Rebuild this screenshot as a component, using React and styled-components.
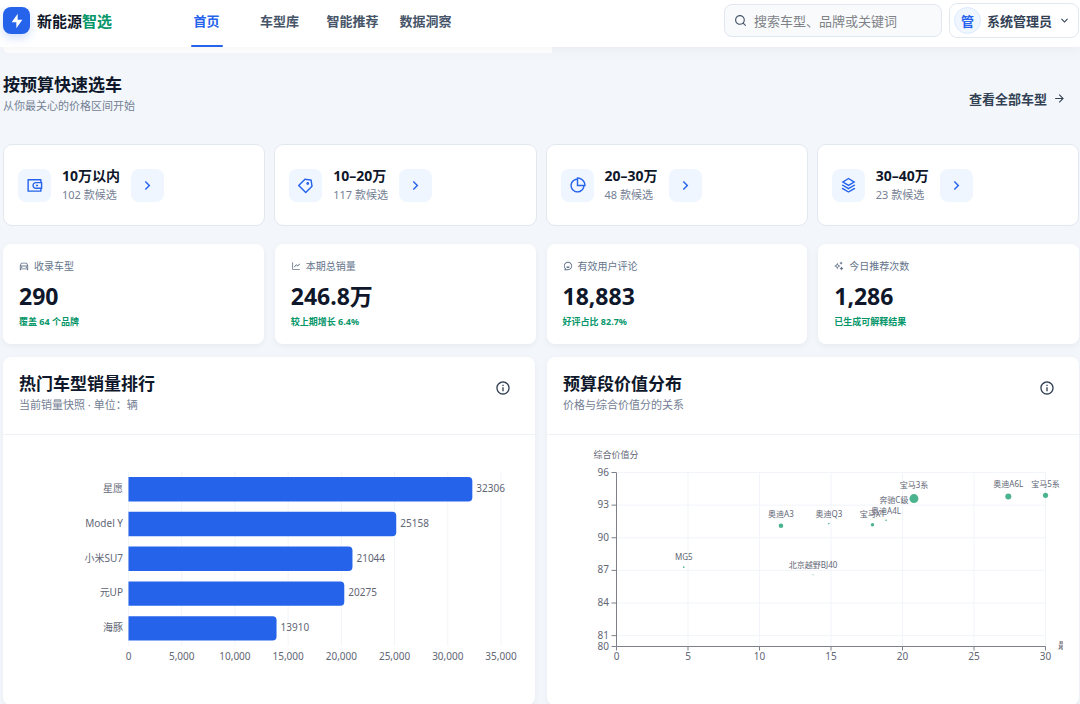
import React from "react";
import styled, { createGlobalStyle, css } from "styled-components";
import {
  RiArrowDownSLine,
  RiArrowRightLine,
  RiArrowRightSLine,
  RiCarLine,
  RiChatSmile3Line,
  RiFlashlightFill,
  RiInformationLine,
  RiLineChartLine,
  RiPieChart2Line,
  RiPriceTag3Line,
  RiSearchLine,
  RiSparkling2Line,
  RiStackLine,
  RiWallet3Line,
} from "react-icons/ri";

const GlobalStyle = createGlobalStyle`
  * {
    box-sizing: border-box;
  }
  body {
    margin: 0;
    background: #f3f7fb;
    color: #0f172a;
    font-family: "Noto Sans", "Noto Sans CJK SC", sans-serif;
    font-size: 13px;
  }
  h1, h2, p, dl, dd {
    margin: 0;
  }
  a {
    color: inherit;
    text-decoration: none;
  }
  button, input {
    font: inherit;
    color: inherit;
  }
`;

const Header = styled.header`
  position: sticky;
  top: 0;
  z-index: 2;
  display: flex;
  align-items: center;
  height: 47px;
  padding: 0 1px 6px 3px;
  background: #fff;
  box-shadow: 0 4px 12px rgba(15, 23, 42, 0.04);
`;

const Brand = styled.a`
  display: flex;
  align-items: center;
  gap: 7px;
  width: 167px;
  font-size: 15px;
  font-weight: 700;
`;

const BrandMark = styled.span`
  display: grid;
  place-items: center;
  width: 27px;
  height: 27px;
  border-radius: 8px;
  background: #2563eb;
  color: #fff;
  box-shadow: 0 4px 10px rgba(37, 99, 235, 0.2);
`;

const BrandAccent = styled.span`
  color: #059669;
`;

const Nav = styled.nav`
  display: flex;
  align-self: stretch;
`;

const NavLink = styled.a`
  position: relative;
  display: flex;
  align-items: center;
  justify-content: center;
  width: 73px;
  font-weight: 700;
  color: #475569;
  ${({ $active }) =>
    $active &&
    css`
      color: #2563eb;
      &::after {
        content: "";
        position: absolute;
        bottom: -6px;
        width: 32px;
        height: 2px;
        border-radius: 2px;
        background: #2563eb;
      }
    `}
`;

const Search = styled.label`
  display: flex;
  align-items: center;
  gap: 7px;
  width: 218px;
  height: 33px;
  margin-left: auto;
  padding: 0 9px;
  border: 1px solid #e2e8f0;
  border-radius: 8px;
  background: #f8fafc;
  color: #475569;
`;

const SearchInput = styled.input`
  flex: 1;
  min-width: 0;
  padding: 0;
  border: 0;
  outline: 0;
  background: none;
  &::placeholder {
    color: #7f8287;
    opacity: 1;
  }
`;

const UserButton = styled.button`
  display: flex;
  align-items: center;
  gap: 6px;
  height: 35px;
  margin-left: 7px;
  padding: 0 7px 0 4px;
  border: 1px solid #e2e8f0;
  border-radius: 8px;
  background: #fff;
  font-weight: 700;
  color: #334155;
`;

const Avatar = styled.span`
  display: grid;
  place-items: center;
  width: 27px;
  height: 27px;
  border: 1px solid #dbeafe;
  border-radius: 50%;
  background: #eff6ff;
  color: #2563eb;
`;

const HeroEdge = styled.div`
  width: 51%;
  height: 6px;
  border-radius: 0 0 0 8px;
  background: #fff;
`;

const Main = styled.main`
  padding: 0 1px 0 3px;
`;

const SectionHead = styled.div`
  display: flex;
  align-items: center;
  justify-content: space-between;
  padding: 20px 13px 0 0;
`;

const Title = styled.h2`
  font-size: 17px;
  line-height: 24px;
  font-weight: 700;
`;

const Subtitle = styled.p`
  font-size: 11px;
  line-height: 18px;
  color: #748094;
`;

const MoreLink = styled.a`
  display: flex;
  align-items: center;
  gap: 6px;
  padding-top: 8px;
  font-weight: 700;
  color: #334155;
`;

const BudgetGrid = styled.div`
  display: grid;
  grid-template-columns: repeat(4, 1fr);
  gap: 9px;
  margin-top: 29px;
`;

const BudgetCard = styled.a`
  display: flex;
  align-items: center;
  gap: 11px;
  height: 82px;
  padding: 0 14px;
  border: 1px solid #e2e8f0;
  border-radius: 9px;
  background: #fff;
`;

const IconTile = styled.span`
  display: grid;
  place-items: center;
  width: 33px;
  height: 33px;
  border-radius: 8px;
  background: #eff6ff;
  color: #2563eb;
`;

const BudgetName = styled.strong`
  display: block;
  font-size: 14px;
  line-height: 20px;
`;

const BudgetCount = styled.span`
  display: block;
  font-size: 11px;
  line-height: 18px;
  color: #748094;
`;

const KpiGrid = styled.div`
  display: grid;
  grid-template-columns: repeat(4, 1fr);
  gap: 11px;
  margin-top: 18px;
`;

const KpiCard = styled.section`
  padding: 14px 16px;
  border-radius: 8px;
  background: #fff;
  box-shadow: 0 2px 6px rgba(15, 23, 42, 0.05);
`;

const KpiLabel = styled.p`
  display: flex;
  align-items: center;
  gap: 5px;
  font-size: 10px;
  line-height: 16px;
  color: #64748b;
`;

const KpiValue = styled.p`
  margin-top: 6px;
  font-size: 23px;
  line-height: 32px;
  font-weight: 700;
`;

const KpiNote = styled.p`
  font-size: 9px;
  line-height: 18px;
  padding-top: 1px;
  margin-bottom: -1px;
  font-weight: 700;
  color: #059669;
`;

const PanelGrid = styled.div`
  display: grid;
  grid-template-columns: repeat(2, 1fr);
  gap: 12px;
  margin-top: 13px;
`;

const Panel = styled.section`
  min-width: 0;
  border-radius: 8px;
  background: #fff;
  box-shadow: 0 2px 6px rgba(15, 23, 42, 0.05);
`;

const PanelHead = styled.div`
  display: flex;
  justify-content: space-between;
  padding: 15px 16px 20px;
  border-bottom: 1px solid #eef2f7;
`;

const InfoButton = styled.button`
  display: grid;
  place-items: center;
  width: 32px;
  height: 32px;
  padding: 0;
  border: 0;
  background: none;
  color: #334155;
`;

const Chart = styled.svg`
  display: block;
  width: 100%;
  height: auto;
  font-size: 10px;
  fill: #5f6675;
`;

const navItems = ["首页", "车型库", "智能推荐", "数据洞察"];

const budgets = [
  { name: "10万以内", count: 102, Icon: RiWallet3Line },
  { name: "10–20万", count: 117, Icon: RiPriceTag3Line },
  { name: "20–30万", count: 48, Icon: RiPieChart2Line },
  { name: "30–40万", count: 23, Icon: RiStackLine },
];

const kpis = [
  { label: "收录车型", value: "290", note: "覆盖 64 个品牌", Icon: RiCarLine },
  { label: "本期总销量", value: "246.8万", note: "较上期增长 6.4%", Icon: RiLineChartLine },
  { label: "有效用户评论", value: "18,883", note: "好评占比 82.7%", Icon: RiChatSmile3Line },
  { label: "今日推荐次数", value: "1,286", note: "已生成可解释结果", Icon: RiSparkling2Line },
];

const sales = [
  { name: "星愿", value: 32306 },
  { name: "Model Y", value: 25158 },
  { name: "小米SU7", value: 21044 },
  { name: "元UP", value: 20275 },
  { name: "海豚", value: 13910 },
];

const cars = [
  { name: "MG5", price: 4.7, score: 87.3, r: 0.9 },
  { name: "奥迪A3", price: 11.5, score: 91.1, r: 2.3 },
  { name: "奥迪Q3", price: 14.85, score: 91.3, r: 0.8 },
  { name: "北京越野BJ40", price: 13.75, score: 86.6, r: 0.5 },
  { name: "宝马X1", price: 17.9, score: 91.2, r: 1.7 },
  { name: "奥迪A4L", price: 18.85, score: 91.6, r: 0.8 },
  { name: "奔驰C级", price: 19.4, score: 92.6, r: 0.3 },
  { name: "宝马3系", price: 20.8, score: 93.6, r: 4.5 },
  { name: "奥迪A6L", price: 27.4, score: 93.8, r: 3 },
  { name: "宝马5系", price: 30, score: 93.9, r: 2.6 },
];

const barX = (v) => 125.5 + (v / 35000) * 372.5;
const dotX = (v) => 69.5 + (v / 30) * 429;
const dotY = (v) => 37.5 + (96 - v) * 10.875;

// 向右侧圆角的横条
const barPath = (x, y, w, h, r) =>
  `M${x} ${y}h${w - r}a${r} ${r} 0 0 1 ${r} ${r}v${h - 2 * r}a${r} ${r} 0 0 1 ${-r} ${r}h${r - w}z`;

function SalesChart() {
  return (
    <Chart viewBox="0 0 532 270" role="img" aria-label="热门车型销量排行">
      {[0, 5000, 10000, 15000, 20000, 25000, 30000, 35000].map((v) => (
        <g key={v}>
          <path d={`M${barX(v)} 37v174`} stroke="#f1f4f9" />
          <text x={barX(v)} y="225" textAnchor="middle">
            {v.toLocaleString("en-US")}
          </text>
        </g>
      ))}
      {sales.map(({ name, value }, i) => {
        const y = 42 + i * 34.8;
        return (
          <g key={name}>
            <path
              d={barPath(barX(0), y, barX(value) - barX(0), 24.4, 4)}
              fill="#2563eb"
            />
            <text x="120" y={y + 15} textAnchor="end">
              {name}
            </text>
            <text x={barX(value) + 4} y={y + 15}>
              {value}
            </text>
          </g>
        );
      })}
    </Chart>
  );
}

function ValueChart() {
  return (
    <Chart viewBox="0 0 532 270" role="img" aria-label="预算段价值分布">
      <clipPath id="plot">
        <rect width="516" height="270" />
      </clipPath>
      <text x="69" y="23" textAnchor="middle" fontSize="9">
        综合价值分
      </text>
      {[96, 93, 90, 87, 84, 81, 80].map((v) => (
        <g key={v}>
          <path d={`M69.5 ${dotY(v)}h429`} stroke="#f1f4f9" />
          <path d={`M64.5 ${dotY(v)}h5`} stroke="#7d8089" />
          <text x="62" y={dotY(v) + 3} textAnchor="end">
            {v}
          </text>
        </g>
      ))}
      {[0, 5, 10, 15, 20, 25, 30].map((v) => (
        <g key={v}>
          <path d={`M${dotX(v)} 37.5v174`} stroke="#f1f4f9" />
          <path d={`M${dotX(v)} 211.5v4`} stroke="#7d8089" />
          <text x={dotX(v)} y="225" textAnchor="middle">
            {v}
          </text>
        </g>
      ))}
      <path d="M69.5 37.5v174h429" fill="none" stroke="#7d8089" />
      <g clipPath="url(#plot)">
        <text x="511" y="214" fontSize="9">
          最低价
        </text>
      </g>
      {cars.map(({ name, price, score, r }) => (
        <g key={name}>
          <circle cx={dotX(price)} cy={dotY(score)} r={r} fill="#4bb48e" />
          <text
            x={dotX(price)}
            y={dotY(score) - r - 6}
            textAnchor="middle"
            fontSize="8"
          >
            {name}
          </text>
        </g>
      ))}
    </Chart>
  );
}

function ChartPanel({ title, subtitle, children }) {
  return (
    <Panel>
      <PanelHead>
        <div>
          <Title>{title}</Title>
          <Subtitle>{subtitle}</Subtitle>
        </div>
        <InfoButton aria-label="说明">
          <RiInformationLine size={16} />
        </InfoButton>
      </PanelHead>
      {children}
    </Panel>
  );
}

function App() {
  return (
    <>
      <GlobalStyle />
      <Header>
        <Brand href="#">
          <BrandMark>
            <RiFlashlightFill size={16} />
          </BrandMark>
          <span>
            新能源<BrandAccent>智选</BrandAccent>
          </span>
        </Brand>
        <Nav>
          {navItems.map((item, i) => (
            <NavLink key={item} href="#" $active={i === 0}>
              {item}
            </NavLink>
          ))}
        </Nav>
        <Search>
          <RiSearchLine size={13} />
          <SearchInput
            type="search"
            aria-label="搜索"
            placeholder="搜索车型、品牌或关键词"
          />
        </Search>
        <UserButton>
          <Avatar>管</Avatar>
          系统管理员
          <RiArrowDownSLine size={13} />
        </UserButton>
      </Header>
      <Main>
        <HeroEdge />
        <SectionHead>
          <div>
            <Title>按预算快速选车</Title>
            <Subtitle>从你最关心的价格区间开始</Subtitle>
          </div>
          <MoreLink href="#">
            查看全部车型
            <RiArrowRightLine size={13} />
          </MoreLink>
        </SectionHead>
        <BudgetGrid>
          {budgets.map(({ name, count, Icon }) => (
            <BudgetCard key={name} href="#">
              <IconTile>
                <Icon size={17} />
              </IconTile>
              <span>
                <BudgetName>{name}</BudgetName>
                <BudgetCount>{count} 款候选</BudgetCount>
              </span>
              <IconTile>
                <RiArrowRightSLine size={17} />
              </IconTile>
            </BudgetCard>
          ))}
        </BudgetGrid>
        <KpiGrid>
          {kpis.map(({ label, value, note, Icon }) => (
            <KpiCard key={label}>
              <KpiLabel>
                <Icon size={10} />
                {label}
              </KpiLabel>
              <KpiValue>{value}</KpiValue>
              <KpiNote>{note}</KpiNote>
            </KpiCard>
          ))}
        </KpiGrid>
        <PanelGrid>
          <ChartPanel
            title="热门车型销量排行"
            subtitle="当前销量快照 · 单位：辆"
          >
            <SalesChart />
          </ChartPanel>
          <ChartPanel title="预算段价值分布" subtitle="价格与综合价值分的关系">
            <ValueChart />
          </ChartPanel>
        </PanelGrid>
      </Main>
    </>
  );
}

export default App;
